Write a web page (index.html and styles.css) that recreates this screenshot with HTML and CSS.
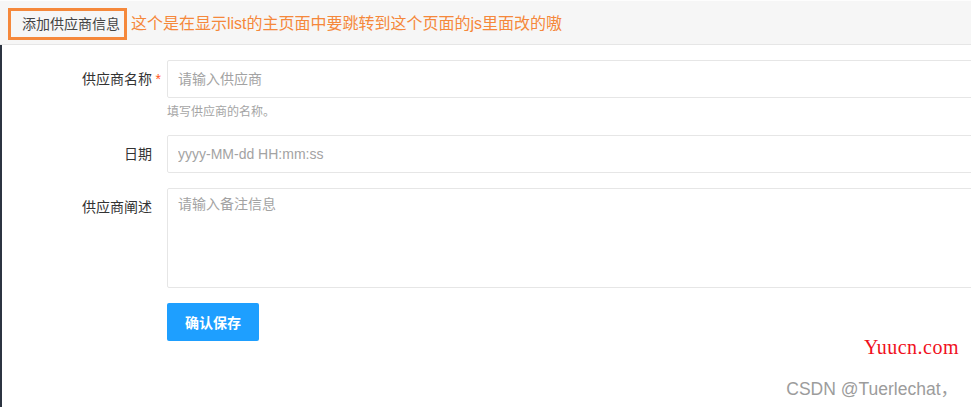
FILE: index.html
```html
<!DOCTYPE html>
<html lang="zh-CN">
<head>
    <meta charset="UTF-8">
    <meta name="viewport" content="width=device-width, initial-scale=1.0">
    <title>添加供应商信息</title>
    <link rel="stylesheet" href="styles.css">
</head>
<body>

<div class="page-header">
    <div class="title-box">添加供应商信息</div>
    <span class="note">这个是在显示list的主页面中要跳转到这个页面的js里面改的嗷</span>
</div>

<div class="main">
    <form class="supplier-form">
        <div class="form-item">
            <label class="form-label required" for="name">供应商名称</label>
            <div class="field">
                <input type="text" id="name" placeholder="请输入供应商">
                <div class="word-aux">填写供应商的名称。</div>
            </div>
        </div>

        <div class="form-item">
            <label class="form-label" for="date">日期</label>
            <div class="field">
                <input type="text" id="date" placeholder="yyyy-MM-dd HH:mm:ss">
            </div>
        </div>

        <div class="form-item">
            <label class="form-label" for="remark">供应商阐述</label>
            <div class="field">
                <textarea id="remark" placeholder="请输入备注信息"></textarea>
            </div>
        </div>

        <div class="form-item">
            <div class="form-label"></div>
            <div class="field">
                <button type="button" class="btn">确认保存</button>
            </div>
        </div>
    </form>

    <div class="mark-site">Yuucn.com</div>
    <div class="mark-csdn">CSDN @Tuerlechat，</div>
</div>

</body>
</html>
```

FILE: styles.css
```css
* {
    box-sizing: border-box;
}

html, body {
    margin: 0;
    padding: 0;
    height: 100%;
    overflow: hidden;
    background: #fff;
    font-family: "Liberation Sans", "Noto Sans CJK SC", sans-serif;
    color: #333;
}

.page-header {
    height: 45px;
    border-top: 1px solid #fdfdfd;
    border-bottom: 1px solid #e6e6e6;
    background-color: #f6f6f6;
    padding: 7px 0 0 8px;
    display: flex;
    align-items: flex-start;
}

.title-box {
    height: 32px;
    line-height: 26px;
    padding: 0 4px 0 11px;
    border: 3px solid #f5883b;
    font-size: 14px;
    color: #444;
}

.note {
    margin-left: 4px;
    line-height: 32px;
    font-size: 16px;
    color: #f5883b;
}

.main {
    position: relative;
    height: calc(100% - 45px);
    border-left: 2px solid #2c3441;
    padding-top: 15px;
}

.form-item {
    display: flex;
    margin-bottom: 15px;
}

.form-label {
    position: relative;
    flex: 0 0 165px;
    padding: 9px 15px;
    line-height: 20px;
    font-size: 14px;
    text-align: right;
    color: #333;
}

.form-label.required::after {
    content: "*";
    position: absolute;
    right: 6px;
    top: 9px;
    color: #ff5722;
}

.field {
    flex: 1;
    margin-right: -8px;
}

input, textarea {
    display: block;
    width: 100%;
    border: 1px solid #e6e6e6;
    border-radius: 2px;
    background: #fff;
    font-family: inherit;
    font-size: 14px;
    color: #333;
    outline: none;
}

input {
    height: 38px;
    padding: 0 10px;
}

textarea {
    height: 100px;
    padding: 5px 10px;
    line-height: 20px;
    resize: none;
}

input::placeholder, textarea::placeholder {
    color: #a3a3a3;
}

.word-aux {
    padding-top: 5px;
    line-height: 18px;
    font-size: 12px;
    color: #a5a5a5;
    margin-bottom: -1px;
}

.btn {
    height: 38px;
    padding: 0 18px;
    border: none;
    border-radius: 2px;
    background-color: #1e9fff;
    color: #fff;
    font-family: inherit;
    font-size: 14px;
    font-weight: bold;
    cursor: pointer;
}

.mark-site {
    position: absolute;
    right: 12px;
    top: 291px;
    font-family: "Liberation Serif", serif;
    font-size: 20px;
    letter-spacing: 0.5px;
    color: #f01020;
}

.mark-csdn {
    position: absolute;
    right: 13px;
    top: 330px;
    font-size: 17.5px;
    color: #9c9c9c;
}
```
